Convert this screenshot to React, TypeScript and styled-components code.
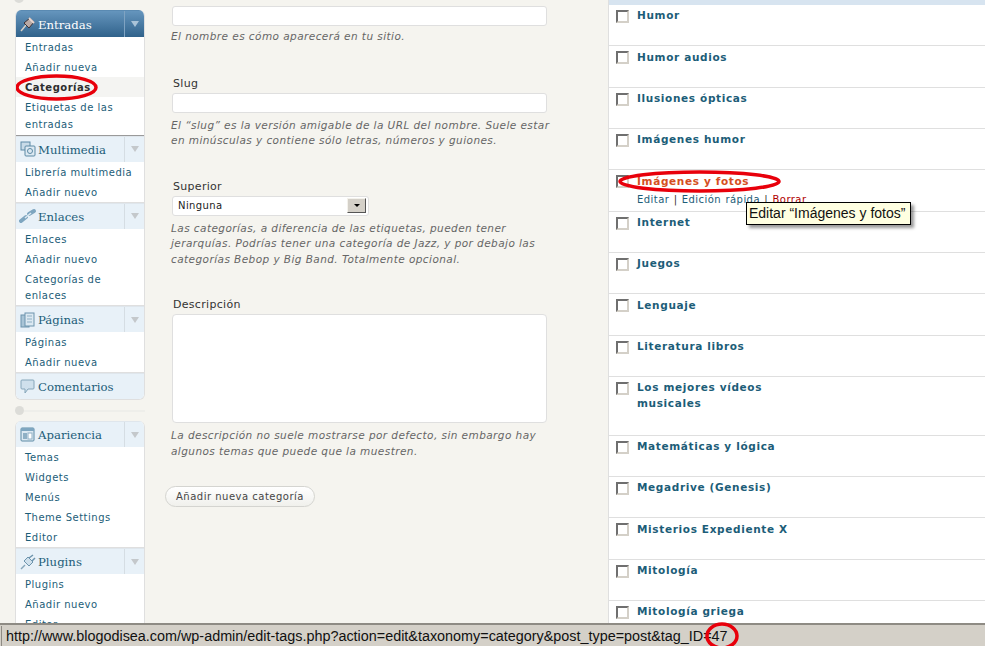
import React from "react";
import styled, { createGlobalStyle } from "styled-components";

const GlobalStyle = createGlobalStyle`
  html, body {
    margin: 0;
    padding: 0;
    height: 100%;
    overflow: hidden;
    background: #f5f4ef;
    font-family: "DejaVu Sans", Verdana, sans-serif;
  }
  * { box-sizing: border-box; }
`;

// Layout
const Page = styled.div`
  width: 985px;
  height: 646px;
  display: flex;
  flex-direction: column;
  overflow: hidden;
`;

const Content = styled.div`
  flex: 1;
  min-height: 0;
  display: flex;
  overflow: hidden;
`;

// Sidebar
const Sidebar = styled.nav`
  width: 172px;
  flex: none;
  padding: 0 27px 0 15px;
`;

const TopRule = styled.div`
  height: 10px;
  position: relative;
  &::before {
    content: "";
    position: absolute;
    left: -1px;
    top: -7px;
    width: 10px;
    height: 10px;
    border-radius: 50%;
    background: #dcdcd8;
  }
`;

const MenuGroup = styled.div`
  border: 1px solid #dfdfdf;
  border-top: 0;
  border-radius: 6px;
  overflow: hidden;
  background: #fff;
`;

const Head = styled.div<{ $current?: boolean }>`
  height: ${(p) => (p.$current ? "27px" : "26px")};
  display: flex;
  align-items: center;
  background: ${(p) =>
    p.$current ? "linear-gradient(#6595bd, #30628b)" : "#e8f1f8"};
  color: ${(p) => (p.$current ? "#fff" : "#1c5d78")};
  border-top: 1px solid ${(p) => (p.$current ? "#5a8ab2" : "#dfe6ec")};
  font-family: "DejaVu Serif", Georgia, serif;
  font-size: 11.7px;
`;

const HeadIcon = styled.span`
  width: 21px;
  margin-left: 1px;
  flex: none;
  display: flex;
  justify-content: center;
`;

const HeadLabel = styled.span`
  flex: 1;
  white-space: nowrap;
  padding-top: 1px;
`;

const Toggle = styled.span<{ $current?: boolean }>`
  width: 20px;
  flex: none;
  align-self: stretch;
  display: flex;
  align-items: center;
  justify-content: center;
  border-left: 1px solid ${(p) => (p.$current ? "#7fa3c2" : "#d5dde3")};
  &::after {
    content: "";
    border-left: 4px solid transparent;
    border-right: 4px solid transparent;
    border-top: 6px solid ${(p) => (p.$current ? "#a9c3d8" : "#c4c8cb")};
  }
`;

const SubMenu = styled.ul<{ $current?: boolean }>`
  list-style: none;
  margin: 0;
  padding: 0 0 ${(p) => (p.$current ? "1px" : "0")};
  background: #fff;
  border: ${(p) => (p.$current ? "1px solid #9a9a9a" : "0")};
  border-top: 0;
  border-bottom: ${(p) => (p.$current ? "1px solid #9a9a9a" : "1px solid #dfdfdf")};
  margin-left: ${(p) => (p.$current ? "-1px" : "0")};
  margin-right: ${(p) => (p.$current ? "-1px" : "0")};
`;

const SubItem = styled.li<{ $active?: boolean }>`
  position: relative;
  padding: 3.25px 4px 0.25px 9px;
  font-size: 10px;
  line-height: 16.5px;
  letter-spacing: 0.5px;
  color: ${(p) => (p.$active ? "#2d2d2d" : "#1c5d78")};
  font-weight: ${(p) => (p.$active ? 700 : 400)};
  background: ${(p) => (p.$active ? "#f4f4f2" : "transparent")};
`;

const Collapse = styled.div`
  height: 21px;
  display: flex;
  align-items: center;
  &::before {
    content: "";
    width: 9px;
    height: 9px;
    border-radius: 50%;
    background: #dcdcd8;
  }
  &::after {
    content: "";
    flex: 1;
    height: 2px;
    background: #eeeeea;
  }
`;

// Form column
const FormColumn = styled.main`
  width: 436px;
  flex: none;
  padding-top: 6px;
  padding-right: 61px;
`;

const Field = styled.div<{ $gap: number }>`
  margin-bottom: ${(p) => p.$gap}px;
`;

const Label = styled.div`
  font-size: 11px;
  line-height: 13px;
  color: #333;
  margin: 0 0 3px 1px;
  letter-spacing: 0.3px;
`;

const TextBox = styled.div`
  height: 20px;
  background: #fff;
  border: 1px solid #dfdfdf;
  border-radius: 3px;
`;

const SelectBox = styled.div`
  width: 197px;
  height: 20px;
  background: #fff;
  border: 1px solid #dfdfdf;
  border-radius: 3px;
  display: flex;
  align-items: center;
  justify-content: space-between;
  padding: 0 2px 0 5px;
  font-size: 10px;
  letter-spacing: 0.4px;
  color: #222;
`;

const SelectArrow = styled.span`
  width: 19px;
  height: 15px;
  background: #d4d0c8;
  border: 1px solid;
  border-color: #f4f2ec #555 #555 #f4f2ec;
  display: flex;
  align-items: center;
  justify-content: center;
  &::after {
    content: "";
    border-left: 3px solid transparent;
    border-right: 3px solid transparent;
    border-top: 3px solid #000;
  }
`;

const TextArea = styled.div`
  height: 109px;
  background: #fff;
  border: 1px solid #dfdfdf;
  border-radius: 4px;
`;

const Hint = styled.p<{ $tight?: boolean }>`
  margin: ${(p) => (p.$tight ? "3px" : "5px")} -8px 0 -1px;
  font-size: 10.5px;
  line-height: 15.5px;
  font-style: italic;
  color: #666;
  letter-spacing: 0.43px;
`;

const SubmitButton = styled.button`
  display: block;
  margin: 0 0 0 -7px;
  width: 150px;
  height: 21px;
  padding: 0;
  border: 1px solid #d4d4d0;
  border-radius: 11px;
  background: linear-gradient(#ffffff, #f0f0ec);
  font-family: inherit;
  font-size: 10px;
  letter-spacing: 0.5px;
  color: #464646;
`;

// Category table
const ListPanel = styled.section`
  flex: 1;
  background: #fff;
  border-left: 1px solid #dfdfdf;
  overflow: hidden;
`;

const ListStrip = styled.div`
  height: 5px;
  background: #d7e4f0;
`;

const Row = styled.div<{ $tall?: boolean }>`
  position: relative;
  height: ${(p) => (p.$tall ? "58.5px" : "41.35px")};
  border-bottom: 1px solid #dfdfdf;
  display: flex;
  padding: 5px 0 0 7px;
`;

const CheckBox = styled.span`
  width: 13px;
  height: 13px;
  flex: none;
  background: #fff;
  border: 2px solid;
  border-color: #6f6f6f #d4d0c8 #d4d0c8 #6f6f6f;
`;

const RowBody = styled.div`
  margin-left: 8px;
  width: 180px;
`;

const RowTitle = styled.div<{ $hover?: boolean }>`
  font-size: 10.5px;
  font-weight: 700;
  line-height: 16px;
  margin-top: -2.7px;
  letter-spacing: 0.65px;
  color: ${(p) => (p.$hover ? "#d54e21" : "#1c5d78")};
`;

const RowActions = styled.div`
  white-space: nowrap;
  font-size: 10px;
  line-height: 13px;
  margin-top: 4px;
  letter-spacing: 0.45px;
  word-spacing: 0.7px;
  color: #1c5d78;
  span {
    color: #333;
  }
  b {
    font-weight: 400;
    color: #b00000;
  }
`;

// Overlays
const Ring = styled.svg<{ $left: number; $top: number }>`
  position: absolute;
  left: ${(p) => p.$left}px;
  top: ${(p) => p.$top}px;
  overflow: visible;
  pointer-events: none;
  z-index: 2;
`;

const Tooltip = styled.div`
  position: absolute;
  left: 137px;
  top: 32px;
  width: 165px;
  height: 23px;
  background: #ffffe1;
  border: 1px solid #000;
  box-shadow: 3px 3px 3px rgba(0, 0, 0, 0.4);
  font-family: "Liberation Sans", Arial, sans-serif;
  font-size: 14px;
  line-height: 21px;
  padding-left: 2px;
  color: #111;
  white-space: nowrap;
  z-index: 3;
`;

const StatusBar = styled.footer`
  position: relative;
  height: 23px;
  flex: none;
  background: #d4d0c8;
  border-top: 2px solid #8e8b84;
  display: flex;
  align-items: center;
  font-family: "Liberation Sans", Arial, sans-serif;
  font-size: 14.38px;
  color: #111;
  white-space: nowrap;
`;

const StatusText = styled.span`
  display: block;
  margin-left: 1px;
  padding-left: 4px;
  border-left: 1px solid #8e8b84;
  line-height: 20px;
`;

// Icons
const icons: Record<string, React.ReactNode> = {
  pin: (
    <svg width="16" height="16" viewBox="0 0 16 16">
      <path d="M1 15 L6 9" stroke="#d9d2c8" strokeWidth="1.5" />
      <path d="M4 7 L10 2 L14 6 L9 12 Z" fill="#b9a9a4" stroke="#3b3236" />
      <path d="M9 2 L14 7" stroke="#e9d7d0" strokeWidth="2" />
    </svg>
  ),
  media: (
    <svg width="16" height="18" viewBox="0 0 16 18">
      <rect x="1" y="2" width="9" height="8" fill="#c9dbe8" stroke="#5d8aa5" />
      <rect x="5" y="6" width="10" height="10" rx="1" fill="#dce9f2" stroke="#5d8aa5" />
      <circle cx="10" cy="11" r="2.5" fill="none" stroke="#5d8aa5" />
    </svg>
  ),
  link: (
    <svg width="18" height="16" viewBox="0 0 18 16" fill="none">
      <path d="M2 13 L7 9" stroke="#7ea6c0" strokeWidth="4" strokeLinecap="round" />
      <path d="M10 6 L15 3" stroke="#7ea6c0" strokeWidth="4" strokeLinecap="round" />
      <path d="M6 10 L12 5" stroke="#dce9f2" strokeWidth="1.5" />
    </svg>
  ),
  pages: (
    <svg width="15" height="16" viewBox="0 0 15 16">
      <rect x="1" y="3" width="8" height="12" fill="#a9c4d6" stroke="#6d94ad" />
      <rect x="5" y="1" width="9" height="13" fill="#dce9f2" stroke="#6d94ad" />
      <path d="M7 4 H12 M7 7 H12 M7 10 H12" stroke="#8fb0c5" />
    </svg>
  ),
  comment: (
    <svg width="15" height="16" viewBox="0 0 15 16">
      <path
        d="M2 1 H13 Q14 1 14 2 V9 Q14 10 13 10 H8 L5 14 V10 H2 Q1 10 1 9 V2 Q1 1 2 1 Z"
        fill="#cfe0ec"
        stroke="#86a6ba"
      />
    </svg>
  ),
  theme: (
    <svg width="15" height="15" viewBox="0 0 15 15">
      <rect x="1" y="1" width="13" height="13" rx="1" fill="#dce9f2" stroke="#5d8aa5" />
      <rect x="1" y="1" width="13" height="3" fill="#7ea6c0" />
      <rect x="3" y="6" width="4" height="6" fill="#8fb0c5" />
      <rect x="8" y="6" width="4" height="6" fill="#fff" stroke="#8fb0c5" />
    </svg>
  ),
  plug: (
    <svg width="16" height="16" viewBox="0 0 16 16" fill="none">
      <path d="M1 15 L5 11" stroke="#86a6ba" strokeWidth="1.5" />
      <path d="M4 7 L9 12 L13 8 L8 3 Z" fill="#cfe0ec" stroke="#6d94ad" />
      <path d="M9 4 L13 1 M12 7 L15 4" stroke="#6d94ad" strokeWidth="1.5" />
    </svg>
  ),
};

// Data
interface IMenu {
  label: string;
  icon: string;
  current?: boolean;
  items: string[];
}

const topMenus: IMenu[] = [
  {
    label: "Entradas",
    icon: "pin",
    current: true,
    items: ["Entradas", "Añadir nueva", "Categorías", "Etiquetas de las entradas"],
  },
  { label: "Multimedia", icon: "media", items: ["Librería multimedia", "Añadir nuevo"] },
  {
    label: "Enlaces",
    icon: "link",
    items: ["Enlaces", "Añadir nuevo", "Categorías de enlaces"],
  },
  { label: "Páginas", icon: "pages", items: ["Páginas", "Añadir nueva"] },
  { label: "Comentarios", icon: "comment", items: [] },
];

const bottomMenus: IMenu[] = [
  {
    label: "Apariencia",
    icon: "theme",
    items: ["Temas", "Widgets", "Menús", "Theme Settings", "Editor"],
  },
  { label: "Plugins", icon: "plug", items: ["Plugins", "Añadir nuevo", "Editor"] },
];

const categories = [
  "Humor",
  "Humor audios",
  "Ilusiones ópticas",
  "Imágenes humor",
  "Imágenes y fotos",
  "Internet",
  "Juegos",
  "Lenguaje",
  "Literatura libros",
  "Los mejores vídeos musicales",
  "Matemáticas y lógica",
  "Megadrive (Genesis)",
  "Misterios Expediente X",
  "Mitología",
  "Mitología griega",
];

function RedRing({ left, top, w, h }: { left: number; top: number; w: number; h: number }) {
  return (
    <Ring $left={left} $top={top} width={w} height={h} viewBox={`0 0 ${w} ${h}`}>
      <ellipse
        cx={w / 2}
        cy={h / 2}
        rx={w / 2 - 2}
        ry={h / 2 - 2}
        fill="none"
        stroke="#e8000b"
        strokeWidth="3.5"
      />
    </Ring>
  );
}

function Menu({ menus }: { menus: IMenu[] }) {
  return (
    <MenuGroup>
      {menus.map((menu) => (
        <React.Fragment key={menu.label}>
          <Head $current={menu.current}>
            <HeadIcon>{icons[menu.icon]}</HeadIcon>
            <HeadLabel>{menu.label}</HeadLabel>
            {menu.items.length > 0 && <Toggle $current={menu.current} />}
          </Head>
          {menu.items.length > 0 && (
            <SubMenu $current={menu.current}>
              {menu.items.map((item) => (
                <SubItem key={item} $active={item === "Categorías"}>
                  {item}
                  {item === "Categorías" && <RedRing left={-1} top={-3} w={83} h={27} />}
                </SubItem>
              ))}
            </SubMenu>
          )}
        </React.Fragment>
      ))}
    </MenuGroup>
  );
}

function App() {
  return (
    <Page>
      <GlobalStyle />
      <Content>
        <Sidebar>
          <TopRule />
          <Menu menus={topMenus} />
          <Collapse />
          <Menu menus={bottomMenus} />
        </Sidebar>
        <FormColumn>
          <Field $gap={32}>
            <TextBox />
            <Hint $tight>El nombre es cómo aparecerá en tu sitio.</Hint>
          </Field>
          <Field $gap={31}>
            <Label>Slug</Label>
            <TextBox />
            <Hint>
              El “slug” es la versión amigable de la URL del nombre. Suele estar en minúsculas y
              contiene sólo letras, números y guiones.
            </Hint>
          </Field>
          <Field $gap={31}>
            <Label>Superior</Label>
            <SelectBox>
              Ninguna
              <SelectArrow />
            </SelectBox>
            <Hint>
              Las categorías, a diferencia de las etiquetas, pueden tener jerarquías. Podrías tener
              una categoría de Jazz, y por debajo las categorías Bebop y Big Band. Totalmente
              opcional.
            </Hint>
          </Field>
          <Field $gap={27}>
            <Label>Descripción</Label>
            <TextArea />
            <Hint>
              La descripción no suele mostrarse por defecto, sin embargo hay algunos temas que
              puede que la muestren.
            </Hint>
          </Field>
          <SubmitButton>Añadir nueva categoría</SubmitButton>
        </FormColumn>
        <ListPanel>
          <ListStrip />
          {categories.map((name) => {
            const hover = name === "Imágenes y fotos";
            return (
              <Row key={name} $tall={name.startsWith("Los mejores")}>
                <CheckBox />
                <RowBody>
                  <RowTitle $hover={hover}>{name}</RowTitle>
                  {hover && (
                    <RowActions>
                      Editar <span>|</span> Edición rápida <span>|</span> <b>Borrar</b>
                    </RowActions>
                  )}
                </RowBody>
                {hover && (
                  <>
                    <RedRing left={9} top={0} w={163} h={23} />
                    <Tooltip>Editar “Imágenes y fotos”</Tooltip>
                  </>
                )}
              </Row>
            );
          })}
        </ListPanel>
      </Content>
      <StatusBar>
        <StatusText>
          http://www.blogodisea.com/wp-admin/edit-tags.php?action=edit&amp;taxonomy=category&amp;post_type=post&amp;tag_ID=47
        </StatusText>
        <RedRing left={705} top={-3} w={34} h={28} />
      </StatusBar>
    </Page>
  );
}

export default App;
